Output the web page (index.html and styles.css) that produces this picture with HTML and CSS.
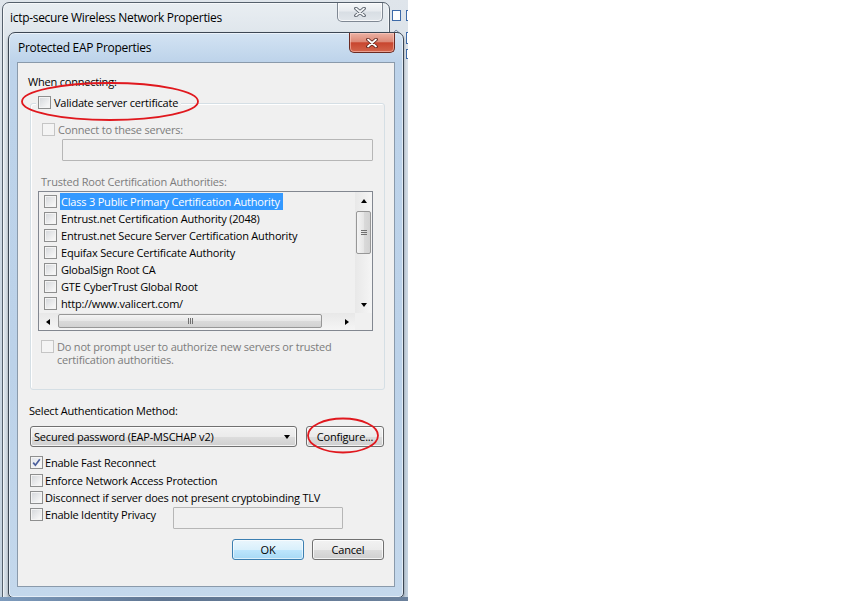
FILE: index.html
```html
<!DOCTYPE html>
<html>
<head>
<meta charset="utf-8">
<link rel="stylesheet" href="styles.css">
</head>
<body>
<div class="desktop">
  <div class="backdrop"></div>
  <svg class="behind-right" width="20" height="60" viewBox="0 0 20 60">
    <rect x="4.5" y="10.5" width="8" height="10" fill="#fff" stroke="#3d6aa8"/>
    <rect x="18.5" y="10.5" width="4" height="10" fill="#fff" stroke="#3d6aa8"/>
    <path d="M4.5 34 L8 30 L12.5 34" fill="none" stroke="#7a8ea6"/>
    <rect x="18.5" y="32.5" width="4" height="11" fill="#fff" stroke="#3d6aa8"/>
    <rect x="18.5" y="49.5" width="4" height="9" fill="#fff" stroke="#3d6aa8"/>
  </svg>

  <div class="window winbg">
    <div class="titlebar">
      <span class="title">ictp-secure Wireless Network Properties</span>
      <span class="close close-gray">
        <svg width="12" height="10" viewBox="0 0 12 10"><path d="M2 1.5L10 8.5M10 1.5L2 8.5" stroke="#4d5560" stroke-width="3.6" stroke-linecap="round"/><path d="M2 1.5L10 8.5M10 1.5L2 8.5" stroke="#f2f4f6" stroke-width="1.8" stroke-linecap="round"/></svg>
      </span>
    </div>
  </div>

  <div class="window dialog">
    <div class="titlebar">
      <span class="title">Protected EAP Properties</span>
      <span class="close close-red">
        <svg width="12" height="10" viewBox="0 0 12 10"><path d="M2 1.5L10 8.5M10 1.5L2 8.5" stroke="#5a2018" stroke-width="3.6" stroke-linecap="round"/><path d="M2 1.5L10 8.5M10 1.5L2 8.5" stroke="#ffffff" stroke-width="1.8" stroke-linecap="round"/></svg>
      </span>
    </div>
    <div class="client">
      <div class="label when">When connecting:</div>
      <div class="group">
        <div class="legend"><span class="cb"></span><span>Validate server certificate</span></div>
        <div class="row servers disabled"><span class="cb cb-dis"></span><span>Connect to these servers:</span></div>
        <div class="textbox tb-servers"></div>
        <div class="label trusted disabled">Trusted Root Certification Authorities:</div>
        <div class="list">
          <div class="items">
            <div class="item"><span class="cb"></span><span class="itext sel">Class 3 Public Primary Certification Authority</span></div>
            <div class="item"><span class="cb"></span><span class="itext">Entrust.net Certification Authority (2048)</span></div>
            <div class="item"><span class="cb"></span><span class="itext">Entrust.net Secure Server Certification Authority</span></div>
            <div class="item"><span class="cb"></span><span class="itext">Equifax Secure Certificate Authority</span></div>
            <div class="item"><span class="cb"></span><span class="itext">GlobalSign Root CA</span></div>
            <div class="item"><span class="cb"></span><span class="itext">GTE CyberTrust Global Root</span></div>
            <div class="item"><span class="cb"></span><span class="itext">http://www.valicert.com/</span></div>
          </div>
          <div class="vscroll">
            <div class="sbtn"><span class="tri tri-up"></span></div>
            <div class="vtrack"><div class="vthumb"><span class="grip"></span></div></div>
            <div class="sbtn"><span class="tri tri-down"></span></div>
          </div>
          <div class="hscroll">
            <div class="sbtn"><span class="tri tri-left"></span></div>
            <div class="htrack"><div class="hthumb"><span class="hgrip"></span></div></div>
            <div class="sbtn"><span class="tri tri-right"></span></div>
          </div>
          <div class="corner"></div>
        </div>
        <div class="row prompt disabled"><span class="cb cb-dis"></span><span class="plines"><span>Do not prompt user to authorize new servers or trusted</span><span>certification authorities.</span></span></div>
      </div>
      <div class="label method">Select Authentication Method:</div>
      <div class="method-row">
        <div class="combo"><span>Secured password (EAP-MSCHAP v2)</span><span class="tri tri-down combo-arrow"></span></div>
        <div class="btn configure">Configure...</div>
      </div>
      <div class="checks">
        <div class="crow"><span class="cb cb-on"><svg width="11" height="11" viewBox="0 0 11 11"><path d="M2.2 5.6L4.4 8.2L8.8 2.2" fill="none" stroke="#4b5f9c" stroke-width="1.7"/></svg></span><span>Enable Fast Reconnect</span></div>
        <div class="crow"><span class="cb"></span><span>Enforce Network Access Protection</span></div>
        <div class="crow"><span class="cb"></span><span>Disconnect if server does not present cryptobinding TLV</span></div>
        <div class="crow privacy"><span class="plabel"><span class="cb"></span><span>Enable Identity Privacy</span></span><span class="textbox tb-privacy"></span></div>
      </div>
      <div class="buttons">
        <div class="btn btn-default">OK</div>
        <div class="btn">Cancel</div>
      </div>
    </div>
  </div>

  <svg class="annot" width="864" height="601" viewBox="0 0 864 601">
    <ellipse cx="110" cy="101.5" rx="88" ry="18.5" fill="none" stroke="#e0181e" stroke-width="1.8"/>
    <ellipse cx="343" cy="435.5" rx="35" ry="17" fill="none" stroke="#e0181e" stroke-width="1.8"/>
  </svg>
  <div class="taskbar"></div>
</div>
</body>
</html>
```

FILE: styles.css
```css
* { box-sizing: border-box; margin: 0; padding: 0; }
html, body { width: 864px; height: 601px; overflow: hidden; background: #fff; }
body { font-family: "Open Sans", "Noto Sans", sans-serif; font-size: 11px; line-height: 15px; letter-spacing: -0.2px; color: #000; }

.desktop { position: relative; width: 864px; height: 601px; background: #fff; overflow: hidden; }

.backdrop {
  position: absolute; left: 0; top: 0; width: 408px; height: 601px;
  background: linear-gradient(180deg, #dfe5eb 0, #cdd8e3 40%, #c4d2df 100%);
}
.behind-right { position: absolute; left: 388px; top: 0; }

.window { position: absolute; display: flex; flex-direction: column; }
.titlebar { display: flex; align-items: center; justify-content: space-between; flex: none; }
.title { font-size: 12px; line-height: 18px; letter-spacing: -0.3px; color: #000; white-space: nowrap; }

.close {
  align-self: flex-start; display: flex; align-items: center; justify-content: center;
  border: 1px solid; border-top: none; border-radius: 0 0 5px 5px;
}
.close-gray {
  width: 46px; height: 19px; border-color: #7f8893;
  background: linear-gradient(180deg, #f4f6f8 0, #e7ebef 45%, #d8dee4 50%, #e1e6eb 100%);
  box-shadow: inset 0 0 0 1px rgba(255,255,255,.7);
}
.close-red {
  width: 46px; height: 20px; border-color: #6b2a22;
  background: linear-gradient(180deg, #ebb2a4 0, #dd8a78 45%, #c8462f 52%, #d3654c 100%);
  box-shadow: inset 0 0 0 1px rgba(255,210,200,.55);
}

.winbg {
  left: 2px; top: 2px; width: 388px; height: 620px;
  border: 1px solid #55606c; border-radius: 7px 7px 0 0;
  padding: 0 6px 0 7px;
  background: linear-gradient(180deg, #e9eef2 0, #dfe6ec 30px, #d3dde6 100%);
  box-shadow: inset 0 0 0 1px rgba(255,255,255,.6);
}
.winbg .titlebar { height: 29px; }

.dialog {
  left: 8px; top: 32px; width: 396px; height: 566px;
  border: 1px solid #3c4754; border-radius: 7px 7px 5px 5px;
  padding: 0 8px 10px;
  background: linear-gradient(180deg, #d3e3f3 0, #bdd3ea 29px, #bcd2e9 60%, #c4d8ec 100%);
  box-shadow: inset 0 0 0 1px rgba(255,255,255,.55), 0 2px 3px rgba(0,0,0,.35);
}
.dialog .titlebar { height: 29px; }
.dialog .title { margin-left: 1px; }

.client {
  flex: 1; display: flex; flex-direction: column;
  background: #f0f0f0; border: 1px solid #8a9aab;
  padding: 0 10px;
}

.label { white-space: nowrap; }
.disabled { color: #7c7c7c; }
.when { margin-top: 11px; }

.cb {
  flex: none; width: 13px; height: 13px; display: inline-flex; align-items: center; justify-content: center;
  border: 1px solid #8e8f8f;
  background: linear-gradient(135deg, #d3d6da 0, #f5f5f5 80%);
  box-shadow: inset 0 0 0 1px #f4f4f4;
}
.cb-dis { border-color: #c5c5c5; background: #f4f4f4; box-shadow: none; }
.cb-on { background: linear-gradient(135deg, #dfe3ea 0, #f8f8f8 80%); }

.group {
  margin: 14px 0 0 2px; width: 355px; height: 287px;
  border: 1px solid #d5dfe5; border-radius: 3px;
  box-shadow: inset 1px 1px 0 #fff;
  display: flex; flex-direction: column; align-items: flex-start;
}
.legend {
  display: flex; align-items: center; gap: 3px; height: 15px;
  margin: -9px 0 0 5px; padding: 0 3px 0 2px; background: #f0f0f0;
  white-space: nowrap;
}
.row { display: flex; gap: 3px; white-space: nowrap; }
.servers { margin: 12px 0 0 11px; height: 15px; align-items: center; }
.textbox { display: block; border: 1px solid #b6b6b6; background: #f0f0f0; border-radius: 1px; }
.tb-servers { margin: 2px 0 0 31px; width: 311px; height: 22px; }
.trusted { margin: 13px 0 0 10px; }

.list {
  margin: 2px 0 0 7px; width: 335px; height: 140px;
  border: 1px solid #828790; background: #f0f0f0;
  display: grid; grid-template-columns: 1fr 17px; grid-template-rows: 1fr 17px;
}
.items { padding-top: 1px; overflow: hidden; }
.item { display: flex; align-items: center; height: 17px; padding-left: 5px; white-space: nowrap; }
.item .cb { margin-right: 3px; }
.itext { height: 17px; line-height: 17px; padding: 0 3px 0 1px; color: #000; }
.itext.sel { background: #3399ff; color: #fff; }

.vscroll { display: flex; flex-direction: column; background: linear-gradient(90deg, #e8e8e8, #f5f5f5); }
.hscroll { display: flex; background: linear-gradient(180deg, #e8e8e8, #f5f5f5); }
.corner { background: #f0f0f0; }
.sbtn { flex: none; width: 17px; height: 17px; display: flex; align-items: center; justify-content: center; }
.vtrack { flex: 1; padding: 2px 0 0 1px; }
.vthumb {
  width: 15px; height: 43px; border: 1px solid #979797; border-radius: 2px;
  background: linear-gradient(90deg, #f4f4f4 0, #e6e6e6 50%, #dadada 51%, #d2d2d2 100%);
  display: flex; align-items: center; justify-content: center;
}
.grip { width: 6px; height: 5px; border-top: 1px solid #707070; border-bottom: 1px solid #707070; position: relative; }
.grip::after { content: ""; position: absolute; left: 0; right: 0; top: 1px; border-top: 1px solid #707070; }
.htrack { flex: 1; padding: 1px 0 0 2px; }
.hthumb {
  width: 264px; height: 14px; border: 1px solid #979797; border-radius: 2px;
  background: linear-gradient(180deg, #f4f4f4 0, #e6e6e6 50%, #dadada 51%, #d2d2d2 100%);
  display: flex; align-items: center; justify-content: center;
}
.hgrip { width: 5px; height: 6px; border-left: 1px solid #707070; border-right: 1px solid #707070; position: relative; }
.hgrip::after { content: ""; position: absolute; top: 0; bottom: 0; left: 1px; border-left: 1px solid #707070; }

.tri { width: 0; height: 0; border: solid transparent; }
.tri-up { border-width: 0 3.5px 4px; border-bottom-color: #000; }
.tri-down { border-width: 4px 3.5px 0; border-top-color: #000; }
.tri-left { border-width: 3.5px 4px 3.5px 0; border-right-color: #000; }
.tri-right { border-width: 3.5px 0 3.5px 4px; border-left-color: #000; }

.prompt { margin: 9px 0 0 10px; align-items: flex-start; }
.plines { display: flex; flex-direction: column; }
.plines span { display: block; height: 13px; line-height: 13px; }

.method { margin: 13px 0 0 1px; }
.method-row { display: flex; gap: 9px; margin: 8px 0 0 2px; }
.btn {
  display: flex; align-items: center; justify-content: center;
  height: 21px; border: 1px solid #707070; border-radius: 3px;
  background: linear-gradient(180deg, #f2f2f2 0, #ebebeb 50%, #dddddd 51%, #cfcfcf 100%);
  box-shadow: inset 0 0 0 1px rgba(255,255,255,.75);
  white-space: nowrap;
}
.combo {
  width: 267px; height: 21px; display: flex; align-items: center; justify-content: space-between;
  padding: 0 6px 0 3px; border: 1px solid #707070; border-radius: 3px;
  background: linear-gradient(180deg, #f2f2f2 0, #ebebeb 50%, #dddddd 51%, #cfcfcf 100%);
  box-shadow: inset 0 0 0 1px rgba(255,255,255,.75);
  white-space: nowrap;
}
.configure { width: 78px; }

.checks { display: flex; flex-direction: column; margin: 7px 0 0 2px; }
.crow { display: flex; align-items: center; gap: 2px; height: 17px; white-space: nowrap; }
.crow:nth-child(2) { margin-top: 1px; }
.privacy { align-items: flex-start; gap: 0; height: 23px; }
.plabel { display: flex; align-items: center; gap: 2px; width: 143px; height: 17px; }
.tb-privacy { margin-top: 1px; width: 170px; height: 22px; }

.buttons { display: flex; justify-content: flex-end; gap: 8px; margin-top: 10px; }
.buttons .btn { width: 72px; }
.btn-default {
  border-color: #3c7fb1;
  background: linear-gradient(180deg, #eaf6fd 0, #d9f0fc 50%, #bee6fd 51%, #a7d9f5 100%);
  box-shadow: inset 0 0 0 1px rgba(255,255,255,.6);
}

.annot { position: absolute; left: 0; top: 0; pointer-events: none; }
.taskbar {
  position: absolute; left: 0; top: 597px; width: 408px; height: 4px;
  background: linear-gradient(90deg, #7d9bbd, #5f7591 40%, #6b819c);
}
```
